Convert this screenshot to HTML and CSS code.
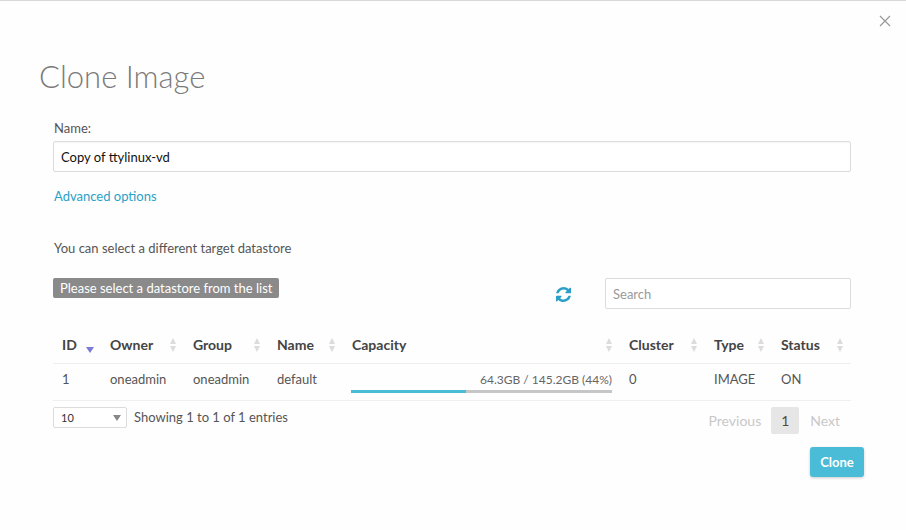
FILE: index.html
```html
<!DOCTYPE html>
<html>
<head>
<meta charset="utf-8">
<link rel="stylesheet" href="styles.css">
</head>
<body>
<div class="modal">
  <button class="close" aria-label="Close">
    <svg width="12" height="12" viewBox="0 0 12 12"><path d="M1 1L11 11M11 1L1 11" stroke="#999" stroke-width="1.2" fill="none"/></svg>
  </button>
  <h2 class="title">Clone Image</h2>
  <div class="form">
    <label class="lbl">Name:</label>
    <input class="text-input" type="text" value="Copy of ttylinux-vd">
    <a class="adv" href="#">Advanced options</a>
    <p class="info">You can select a different target datastore</p>
    <div class="toolbar">
      <span class="badge">Please select a datastore from the list</span>
      <div class="tools">
        <svg class="refresh" width="15" height="15" viewBox="0 0 1536 1536"><path fill="#2b9fc8" d="M1511 928q0 5-1 7-64 268-268 434.5t-478 166.5q-146 0-282.5-55t-243.5-157l-129 129q-19 19-45 19t-45-19-19-45v-448q0-26 19-45t45-19h448q26 0 45 19t19 45-19 45l-137 137q71 66 161 102t187 36q134 0 250-65t186-179q11-17 53-117 8-23 30-23h192q13 0 22.5 9.5t9.5 22.5zm25-800v448q0 26-19 45t-45 19h-448q-26 0-45-19t-19-45 19-45l138-138q-148-137-349-137-134 0-250 65t-186 179q-11 17-53 117-8 23-30 23h-199q-13 0-22.5-9.5t-9.5-22.5v-7q65-268 270-434.5t480-166.5q146 0 284 55.5t245 156.5l130-129q19-19 45-19t45 19 19 45z"/></svg>
        <input class="search" type="text" placeholder="Search">
      </div>
    </div>
    <table class="grid">
      <thead>
        <tr>
          <th class="c-id"><span>ID</span><i class="sort desc"></i></th>
          <th class="c-owner"><span>Owner</span><i class="sort both"></i></th>
          <th class="c-group"><span>Group</span><i class="sort both"></i></th>
          <th class="c-name"><span>Name</span><i class="sort both"></i></th>
          <th class="c-cap"><span>Capacity</span><i class="sort both"></i></th>
          <th class="c-cluster"><span>Cluster</span><i class="sort both"></i></th>
          <th class="c-type"><span>Type</span><i class="sort both"></i></th>
          <th class="c-status"><span>Status</span><i class="sort both"></i></th>
        </tr>
      </thead>
      <tbody>
        <tr>
          <td>1</td>
          <td>oneadmin</td>
          <td>oneadmin</td>
          <td>default</td>
          <td class="cap">
            <div class="cap-text">64.3GB / 145.2GB (44%)</div>
            <div class="bar"><div class="fill" style="width:44%"></div></div>
          </td>
          <td>0</td>
          <td>IMAGE</td>
          <td>ON</td>
        </tr>
      </tbody>
    </table>
    <div class="footer">
      <div class="left">
        <div class="select"><span>10</span><i class="caret"></i></div>
        <span class="showing">Showing 1 to 1 of 1 entries</span>
      </div>
      <div class="pager">
        <span class="pg prev disabled">Previous</span>
        <span class="pg current">1</span>
        <span class="pg disabled">Next</span>
      </div>
    </div>
    <div class="actions">
      <button class="btn">Clone</button>
    </div>
  </div>
</div>
</body>
</html>
```
FILE: styles.css
```css
* { box-sizing: border-box; }
html, body { margin: 0; padding: 0; background: #fefefe; }
body {
  font-family: Lato, "Open Sans", sans-serif;
  font-size: 13px;
  color: #555;
  border-top: 1px solid #d8d8d8;
  height: 530px;
}
.modal {
  position: relative;
}
.close {
  position: absolute;
  top: 14px;
  right: 15px;
  background: none;
  border: 0;
  padding: 0;
  width: 12px;
  height: 12px;
  display: block;
}
.close svg { display: block; }
.title {
  margin: 0;
  padding: 57px 0 0 39px;
  font-weight: 300;
  font-size: 31px;
  line-height: 36px;
  color: #7a7a7a;
}
.form {
  padding: 26px 55px 0 53px;
  display: flex;
  flex-direction: column;
}
.lbl {
  display: block;
  color: #555;
  font-size: 13px;
  line-height: 16px;
  padding-left: 1px;
}
.text-input {
  margin-top: 5px;
  height: 31px;
  border: 1px solid #dcdcdc;
  border-radius: 2px;
  font-family: Lato, sans-serif;
  font-size: 13px;
  color: #111;
  padding: 0 7px;
  background: #fff;
  box-shadow: inset 0 1px 2px rgba(0,0,0,0.04);
}
.adv {
  margin-top: 16px;
  color: #2aa1c9;
  text-decoration: none;
  line-height: 16px;
  padding-left: 1px;
  align-self: flex-start;
}
.info {
  margin: 36px 0 0 0;
  line-height: 16px;
  padding-left: 1px;
  color: #555;
}
.toolbar {
  margin-top: 22px;
  display: flex;
  justify-content: space-between;
  align-items: flex-start;
}
.badge {
  background: #8a8a8a;
  color: #fff;
  height: 20px;
  line-height: 20px;
  padding: 0 7px;
  border-radius: 2px;
  font-size: 13px;
}
.tools {
  display: flex;
  align-items: center;
}
.refresh { display: block; margin-right: 34px; margin-top: 1px; }
.search {
  width: 246px;
  height: 31px;
  border: 1px solid #dcdcdc;
  border-radius: 2px;
  padding: 0 7px;
  font-family: Lato, sans-serif;
  font-size: 13px;
  background: #fff;
}
.search::placeholder { color: #999; }
.grid {
  margin-top: 26px;
  width: 798px;
  border-collapse: collapse;
  table-layout: fixed;
}
.grid th {
  text-align: left;
  font-weight: 700;
  color: #444;
  font-size: 14px;
  height: 28px;
  padding: 0 9px;
  border-bottom: 1px solid #efefef;
  position: relative;
  vertical-align: middle;
}
.grid th span { display: inline-block; padding-bottom: 8px; }
.c-id { width: 48px; }
.c-owner { width: 83px; }
.c-group { width: 84px; }
.c-name { width: 75px; }
.c-cap { width: 277px; }
.c-cluster { width: 85px; }
.c-type { width: 67px; }
.c-status { width: 79px; }
.sort {
  position: absolute;
  right: 7px;
  top: 2px;
  width: 7px;
  height: 16px;
}
.sort.both::before, .sort.both::after {
  content: "";
  position: absolute;
  left: 0;
  border-left: 3.5px solid transparent;
  border-right: 3.5px solid transparent;
}
.sort.both::before { top: 1px; border-bottom: 6px solid #dcdcdc; }
.sort.both::after { top: 9px; border-top: 6px solid #dcdcdc; }
.sort.desc::after {
  content: "";
  position: absolute;
  left: -1px;
  top: 10px;
  border-left: 4px solid transparent;
  border-right: 4px solid transparent;
  border-top: 6px solid #7a7ad8;
}
.grid td {
  padding: 0 9px;
  height: 37px;
  color: #555;
  border-bottom: 1px solid #efefef;
  vertical-align: middle;
  padding-bottom: 6px;
}
.grid td.cap { padding: 0 8px 0 8px; }
.cap-text {
  text-align: right;
  font-size: 12px;
  color: #666;
  line-height: 14px;
  margin-top: 2px;
}
.bar {
  margin-top: 3px;
  height: 3px;
  background: #c6c6c6;
}
.fill { height: 3px; background: #4bbcd6; }
.footer {
  display: flex;
  justify-content: space-between;
  align-items: flex-start;
  margin-top: 6px;
}
.left { display: flex; align-items: center; }
.select {
  width: 74px;
  height: 21px;
  border: 1px solid #dcdcdc;
  border-radius: 2px;
  background: #fff;
  position: relative;
  font-size: 11px;
  color: #333;
  line-height: 19px;
  padding-left: 7px;
}
.caret {
  position: absolute;
  right: 5px;
  top: 7px;
  border-left: 4px solid transparent;
  border-right: 4px solid transparent;
  border-top: 6px solid #888;
}
.showing { margin-left: 7px; color: #555; }
.pager { display: flex; align-items: center; margin-top: 0; font-size: 14px; }
.pg { line-height: 27px; height: 27px; padding: 0 11px; border-radius: 2px; }
.pg.prev { padding-right: 10px; }
.pg.disabled { color: #c8c8c8; }
.pg.current { background: #e6e6e6; color: #5a4a30; width: 28px; text-align: center; padding: 0; }
.actions {
  display: flex;
  justify-content: flex-end;
  margin-top: 13px;
  margin-right: -13px;
}
.btn {
  background: #4bbcd7;
  color: #fff;
  border: 0;
  border-radius: 3px;
  font-family: Lato, sans-serif;
  font-weight: 700;
  font-size: 13px;
  height: 30px;
  width: 54px;
  box-shadow: 0 1px 3px rgba(0,0,0,0.2);
}
```
